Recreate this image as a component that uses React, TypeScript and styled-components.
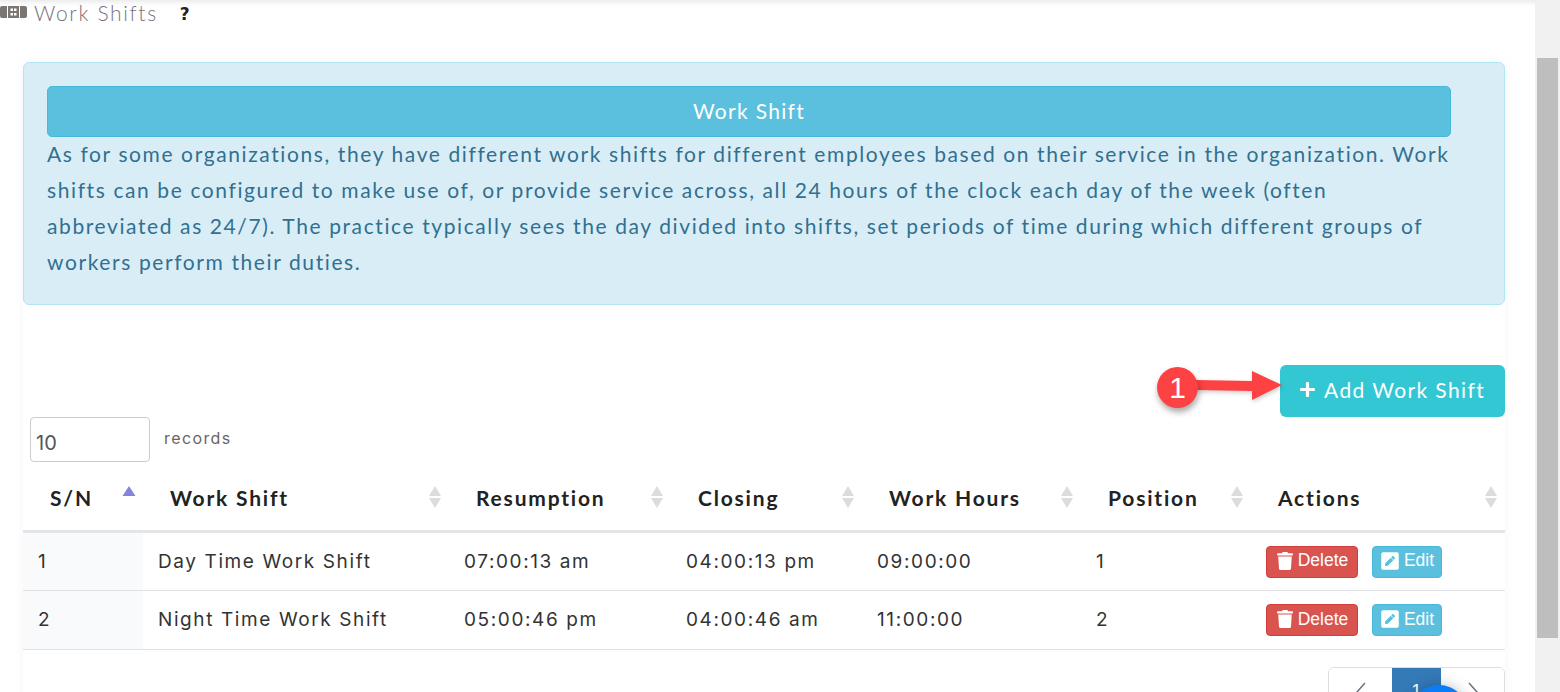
import styled, { createGlobalStyle } from 'styled-components';
import { FaPlus, FaTrash, FaPenSquare } from 'react-icons/fa';

const GlobalStyle = createGlobalStyle`
  html, body {
    margin: 0;
    height: 692px;
    overflow: hidden;
    background: #fff;
  }
  * { box-sizing: border-box; }
`;

const shifts = [
  { sn: 1, name: 'Day Time Work Shift', start: '07:00:13 am', end: '04:00:13 pm', hours: '09:00:00', position: 1 },
  { sn: 2, name: 'Night Time Work Shift', start: '05:00:46 pm', end: '04:00:46 am', hours: '11:00:00', position: 2 },
];

const columns = [
  { label: 'Work Shift', width: 306 },
  { label: 'Resumption', width: 222 },
  { label: 'Closing', width: 191 },
  { label: 'Work Hours', width: 219 },
  { label: 'Position', width: 170 },
  { label: 'Actions', width: 254 },
];

function SortArrows() {
  return (
    <svg width="14" height="24" viewBox="0 0 14 24">
      <path d="M7 1 L13 11 H1 Z" fill="#dcdcdc" />
      <path d="M7 23 L13 13 H1 Z" fill="#dcdcdc" />
    </svg>
  );
}

export default function App() {
  return (
    <Page>
      <GlobalStyle />
      <Main>
        <TitleBar>
          <svg width="27" height="12" viewBox="0 0 27 12">
            <path d="M2 0 H7 V12 H2 Q0 12 0 10 V2 Q0 0 2 0 Z" fill="#7c7672" />
            <path d="M8 0 H19 V12 H8 Z" fill="#7c7672" />
            <path d="M20 0 H25 Q27 0 27 2 V10 Q27 12 25 12 H20 Z" fill="#7c7672" />
            <path d="M10.5 2.5 H13 V5 H10.5 Z M14 2.5 H16.5 V5 H14 Z M10.5 7 H13 V9.5 H10.5 Z M14 7 H16.5 V9.5 H14 Z" fill="#fff" />
          </svg>
          <PageTitle>Work Shifts</PageTitle>
          <HelpMark>?</HelpMark>
        </TitleBar>

        <Content>
          <InfoPanel>
            <InfoHeading>Work Shift</InfoHeading>
            <InfoText>
              As for some organizations, they have different work shifts for different employees based on their service in the organization. Work shifts can be configured to make use of, or provide service across, all 24 hours of the clock each day of the week (often abbreviated as 24/7). The practice typically sees the day divided into shifts, set periods of time during which different groups of workers perform their duties.
            </InfoText>
          </InfoPanel>

          <AddRow>
            <AddButton>
              <FaPlus size={17} />
              Add Work Shift
            </AddButton>
            <Callout>
              <CalloutBadge>1</CalloutBadge>
              <CalloutArrow width="86" height="36" viewBox="0 0 86 36">
                <path d="M0 10 L56 11 V1 L86 15 L56 30 V21 L0 20 Z" fill="#fc4242" />
              </CalloutArrow>
            </Callout>
          </AddRow>

          <RecordsRow>
            <RecordsInput readOnly value="10" />
            <RecordsLabel>records</RecordsLabel>
          </RecordsRow>

          <ShiftTable>
            <colgroup>
              <col style={{ width: 120 }} />
              {columns.map((c) => <col key={c.label} style={{ width: c.width }} />)}
            </colgroup>
            <thead>
              <tr>
                <HeadCell>
                  <HeadInner>
                    S/N
                    <svg width="14" height="24" viewBox="0 0 14 24">
                      <path d="M7 1 L13.5 11 H0.5 Z" fill="#8484dd" />
                    </svg>
                  </HeadInner>
                </HeadCell>
                {columns.map((c) => (
                  <HeadCell key={c.label}>
                    <HeadInner>
                      {c.label}
                      <SortArrows />
                    </HeadInner>
                  </HeadCell>
                ))}
              </tr>
            </thead>
            <tbody>
              {shifts.map((s) => (
                <tr key={s.sn}>
                  <SnCell>{s.sn}</SnCell>
                  <BodyCell>{s.name}</BodyCell>
                  <BodyCell>{s.start}</BodyCell>
                  <BodyCell>{s.end}</BodyCell>
                  <BodyCell>{s.hours}</BodyCell>
                  <BodyCell>{s.position}</BodyCell>
                  <BodyCell>
                    <ActionGroup>
                      <ActionButton $kind="delete"><FaTrash size={18} />Delete</ActionButton>
                      <ActionButton $kind="edit"><FaPenSquare size={20} />Edit</ActionButton>
                    </ActionGroup>
                  </BodyCell>
                </tr>
              ))}
            </tbody>
          </ShiftTable>

          <PagerRow>
            <Pager>
              <PagerItem>
                <svg width="14" height="24" viewBox="0 0 14 24"><path d="M11 3 L3 12 L11 21" fill="none" stroke="#6b7280" strokeWidth="1.5" /></svg>
              </PagerItem>
              <PagerItem $active>1</PagerItem>
              <PagerItem>
                <svg width="14" height="24" viewBox="0 0 14 24"><path d="M3 3 L11 12 L3 21" fill="none" stroke="#6b7280" strokeWidth="1.5" /></svg>
              </PagerItem>
            </Pager>
          </PagerRow>
        </Content>
        <ChatBubble />
      </Main>
      <ScrollTrack>
        <ScrollThumb />
      </ScrollTrack>
    </Page>
  );
}

const Page = styled.div`
  display: flex;
  width: 1560px;
  height: 692px;
  overflow: hidden;
  font-family: "Lato", "Open Sans", sans-serif;
`;

const Main = styled.div`
  position: relative;
  width: 1535px;
  height: 692px;
  overflow: hidden;
  background: #fff;
`;

const TitleBar = styled.div`
  display: flex;
  align-items: center;
  height: 27px;
  padding-bottom: 3px;
  box-shadow: inset 0 7px 6px -6px rgba(0, 0, 0, 0.12);
  color: #7c7672;
`;

const PageTitle = styled.span`
  margin-left: 7px;
  font-size: 21px;
  font-weight: 300;
  letter-spacing: 1.65px;
  color: #77747c;
`;

const HelpMark = styled.span`
  margin: 3px 0 0 22px;
  font-family: "DejaVu Sans", sans-serif;
  font-size: 17px;
  font-weight: 700;
  color: #222;
`;

const Content = styled.div`
  margin: 35px 30px 0 23px;
  box-shadow: 0 0 12px rgba(0, 0, 0, 0.035);
  min-height: 700px;
`;

const InfoPanel = styled.div`
  height: 243px;
  padding: 23px 53px 0 23px;
  background: #d9edf7;
  border: 1px solid #b0e5f3;
  border-radius: 6px;
`;

const InfoHeading = styled.div`
  height: 51px;
  padding-bottom: 3px;
  display: flex;
  align-items: center;
  justify-content: center;
  background: #5bc0de;
  border: 1px solid #46b8da;
  border-radius: 5px;
  color: #fff;
  font-size: 21px;
  letter-spacing: 1.3px;
`;

const InfoText = styled.p`
  margin: -1px -6px 0 0;
  font-size: 21px;
  line-height: 36px;
  letter-spacing: 1.6px;
  color: #31708f;
  font-weight: 400;
`;

const AddRow = styled.div`
  display: flex;
  justify-content: flex-end;
  margin-top: 60px;
  position: relative;
`;

const AddButton = styled.button`
  display: flex;
  align-items: center;
  gap: 8px;
  width: 225px;
  height: 52px;
  padding: 0 0 3px 19px;
  background: #33c7d3;
  border: 0;
  border-radius: 6px;
  color: #fff;
  font-family: inherit;
  font-size: 21px;
  letter-spacing: 1.4px;
`;

const Callout = styled.div`
  position: absolute;
  right: 225px;
  top: 2px;
  display: flex;
  align-items: center;
`;

const CalloutBadge = styled.div`
  width: 41px;
  height: 41px;
  margin-right: -2px;
  z-index: 1;
  display: flex;
  align-items: center;
  justify-content: center;
  border-radius: 50%;
  background: #fc4242;
  box-shadow: 1px 4px 6px rgba(0, 0, 0, 0.35);
  color: #fff;
  font-family: "Liberation Sans", sans-serif;
  font-size: 30px;
`;

const CalloutArrow = styled.svg`
  margin-right: -2px;
  filter: drop-shadow(1px 2px 2px rgba(0, 0, 0, 0.2));
`;

const RecordsRow = styled.div`
  display: flex;
  align-items: flex-start;
  padding-left: 7px;
  height: 52px;
`;

const RecordsInput = styled.input`
  width: 120px;
  height: 45px;
  padding: 6px 5px 0;
  border: 1px solid #ccc;
  border-radius: 4px;
  font-family: "Inter", sans-serif;
  font-size: 20px;
  color: #555;
`;

const RecordsLabel = styled.span`
  margin: 11px 0 0 14px;
  font-family: "Inter", sans-serif;
  font-size: 16px;
  letter-spacing: 1.4px;
  color: #666;
`;

const ShiftTable = styled.table`
  width: 1482px;
  border-collapse: collapse;
  table-layout: fixed;
`;

const HeadCell = styled.th`
  height: 62px;
  padding: 0 7px 4px 27px;
  border-bottom: 3px solid #e3e5e8;
  text-align: left;
  font-size: 21px;
  font-weight: 700;
  letter-spacing: 1.8px;
  color: #222;
`;

const HeadInner = styled.div`
  display: flex;
  align-items: center;
  justify-content: space-between;
`;

const BodyCell = styled.td`
  height: 59px;
  padding: 0 0 0 15px;
  border-bottom: 1px solid #e0e2e4;
  font-family: "Inter", sans-serif;
  font-size: 19px;
  letter-spacing: 1.6px;
  color: #333;
`;

const SnCell = styled(BodyCell)`
  background: #f9fafc;
`;

const ActionGroup = styled.div`
  display: flex;
  gap: 14px;
  margin-top: 1px;
`;

const ActionButton = styled.button<{ $kind: 'delete' | 'edit' }>`
  display: flex;
  align-items: center;
  justify-content: center;
  gap: 4px;
  height: 32px;
  width: ${(p) => (p.$kind === 'delete' ? '92px' : '70px')};
  padding: 0 0 2px;
  background: ${(p) => (p.$kind === 'delete' ? '#d9534f' : '#5bc0de')};
  border: 1px solid ${(p) => (p.$kind === 'delete' ? '#d43f3a' : '#46b8da')};
  border-radius: 4px;
  color: #fff;
  font-family: "Liberation Sans", sans-serif;
  font-size: 17.5px;
`;

const PagerRow = styled.div`
  display: flex;
  justify-content: flex-end;
  margin-top: 17px;
`;

const Pager = styled.div`
  display: flex;
  height: 50px;
  border: 1px solid #ddd;
  border-radius: 6px;
  overflow: hidden;
`;

const PagerItem = styled.div<{ $active?: boolean }>`
  display: flex;
  align-items: center;
  justify-content: center;
  width: ${(p) => (p.$active ? '49px' : '63px')};
  background: ${(p) => (p.$active ? '#337ab7' : '#fff')};
  color: #fff;
  font-family: "Liberation Sans", sans-serif;
  font-size: 18px;
`;

const ChatBubble = styled.div`
  position: absolute;
  left: 1410px;
  top: 685px;
  width: 58px;
  height: 58px;
  border-radius: 50%;
  background: #0b7cf8;
  box-shadow: 0 0 14px rgba(0, 0, 0, 0.25);
`;

const ScrollTrack = styled.div`
  width: 25px;
  height: 692px;
  padding: 58px 2px 0;
  background: #f1f1f1;
`;

const ScrollThumb = styled.div`
  height: 580px;
  background: #bebebe;
`;
